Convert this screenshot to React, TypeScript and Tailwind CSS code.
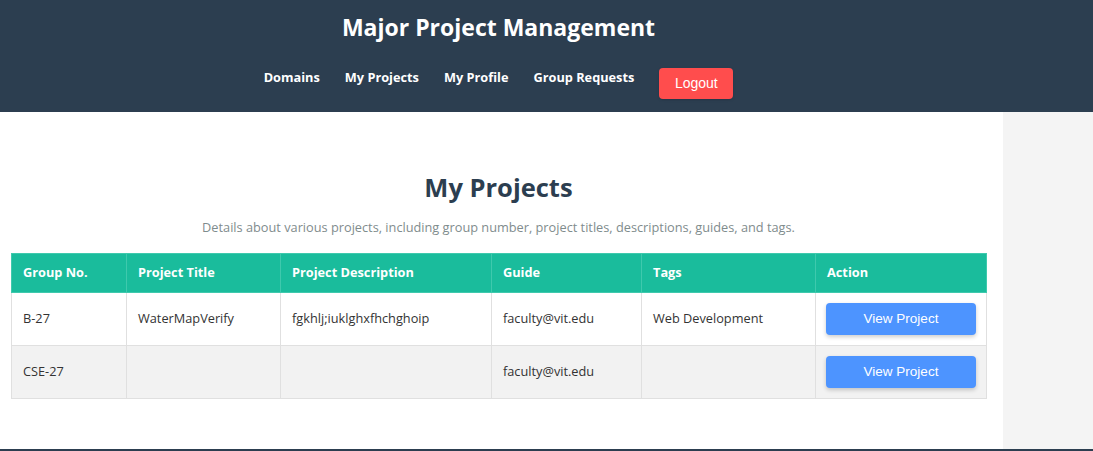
import React from 'react';

const rows = [
  { group: 'B-27', title: 'WaterMapVerify', desc: 'fgkhlj;iuklghxfhchghoip', guide: 'faculty@vit.edu', tags: 'Web Development' },
  { group: 'CSE-27', title: '', desc: '', guide: 'faculty@vit.edu', tags: '' },
];

const cols = [
  { label: 'Group No.', w: 'w-[115px]' },
  { label: 'Project Title', w: 'w-[154px]' },
  { label: 'Project Description', w: 'w-[211px]' },
  { label: 'Guide', w: 'w-[150px]' },
  { label: 'Tags', w: 'w-[174px]' },
  { label: 'Action', w: 'w-[171px]' },
];

const App = () => {
  return (
    <div className="min-h-[451px] flex flex-col bg-white" style={{ fontFamily: '"Open Sans", "Noto Sans", sans-serif' }}>
      {/* Header */}
      <header className="bg-[#2c3e50] h-[112px] w-full">
        <div className="w-[997px] flex flex-col items-center">
          <h1 className="text-white font-bold text-[23px] mt-[11px] leading-8">Major Project Management</h1>
          <nav className="flex items-start gap-[25px] mt-[25px]">
            <a className="text-white font-bold text-[12.75px] leading-[18px]">Domains</a>
            <a className="text-white font-bold text-[12.75px] leading-[18px]">My Projects</a>
            <a className="text-white font-bold text-[12.75px] leading-[18px]">My Profile</a>
            <a className="text-white font-bold text-[12.75px] leading-[18px]">Group Requests</a>
            <button
              className="bg-[#ff4d4d] text-white text-[14px] w-[74px] h-[31px] rounded-[4px] shadow-sm"
              style={{ fontFamily: '"Liberation Sans", Arial, sans-serif' }}
            >
              Logout
            </button>
          </nav>
        </div>
      </header>

      <div className="flex flex-1">
        {/* Main content */}
        <main className="w-[1003px] pl-[11px] pr-[17px]">
          <h2 className="text-center font-bold text-[25.5px] text-[#2c3e50] mt-[57px] leading-9">My Projects</h2>
          <p className="text-center text-[12.75px] text-[#7f8c8d] mt-[12px] leading-5">
            Details about various projects, including group number, project titles, descriptions, guides, and tags.
          </p>
          <table className="mt-[16px] w-[975px] border-collapse text-[12.75px] table-fixed">
            <thead>
              <tr className="bg-[#1abc9c] h-[39px]">
                {cols.map(c => (
                  <th key={c.label} className={`${c.w} text-left text-white font-bold px-[11px] border border-[#3fc9ad]`}>
                    {c.label}
                  </th>
                ))}
              </tr>
            </thead>
            <tbody>
              {rows.map((r, i) => (
                <tr key={r.group} className={`h-[53px] ${i % 2 === 1 ? 'bg-[#f2f2f2]' : 'bg-white'}`}>
                  <td className="px-[11px] border border-[#e0e0e0] text-[#333]">{r.group}</td>
                  <td className="px-[11px] border border-[#e0e0e0] text-[#333]">{r.title}</td>
                  <td className="px-[11px] border border-[#e0e0e0] text-[#333]">{r.desc}</td>
                  <td className="px-[11px] border border-[#e0e0e0] text-[#333]">{r.guide}</td>
                  <td className="px-[11px] border border-[#e0e0e0] text-[#333]">{r.tags}</td>
                  <td className="px-[10px] border border-[#e0e0e0]">
                    <button
                      className="w-[150px] h-[32px] bg-[#4d94ff] text-white text-[13.5px] rounded-[4px] shadow-[0_2px_4px_rgba(0,0,0,0.2)]"
                      style={{ fontFamily: '"Liberation Sans", Arial, sans-serif' }}
                    >
                      View Project
                    </button>
                  </td>
                </tr>
              ))}
            </tbody>
          </table>
        </main>
        {/* Side area */}
        <aside className="flex-1 bg-[#f4f4f4]" />
      </div>

      <footer className="h-[2px] bg-[#2c3e50]" />
    </div>
  );
};

export default App;
